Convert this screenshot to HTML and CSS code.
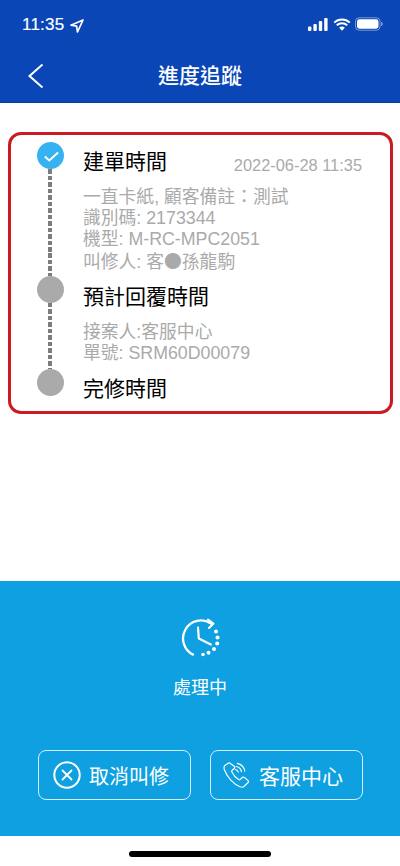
FILE: index.html
```html
<!DOCTYPE html>
<html lang="zh-Hant">
<head>
<meta charset="utf-8">
<title>進度追蹤</title>
<link rel="stylesheet" href="styles.css">
</head>
<body>
<div class="screen">
  <header class="header">
    <div class="status">
      <div class="time">11:35
        <svg class="loc" viewBox="0 0 14 14" width="14" height="14"><path d="M13 1 1 6.200l5.600.9.9 5.900z" fill="none" stroke="#fff" stroke-width="1.700" stroke-linejoin="round"/></svg>
      </div>
      <div class="status-icons">
        <svg viewBox="0 0 20 13" width="20" height="13"><g fill="#fff"><rect x="0" y="8.500" width="3.400" height="4.500" rx="1"/><rect x="5.400" y="6" width="3.400" height="7" rx="1"/><rect x="10.800" y="3" width="3.400" height="10" rx="1"/><rect x="16.200" y="0" width="3.400" height="13" rx="1"/></g></svg>
        <svg viewBox="0 0 18 13" width="18" height="13"><path d="M1.200 4.600a11.200 11.200 0 0 1 15.600 0M3.800 7.300a7.500 7.500 0 0 1 10.400 0" fill="none" stroke="#fff" stroke-width="2"/><path d="M6.200 9.700a3.800 3.800 0 0 1 5.600 0L9 12.800z" fill="#fff"/></svg>
        <svg viewBox="0 0 29 14" width="29" height="14"><rect x=".5" y=".8" width="24.500" height="12.400" rx="3.600" fill="none" stroke="#fff" stroke-opacity=".45"/><rect x="2" y="2.300" width="21.500" height="9.400" rx="2.400" fill="#fff"/><path d="M26.200 4.800c1 .4 1.600 1.200 1.600 2.200s-.6 1.800-1.600 2.200z" fill="#fff" fill-opacity=".5"/></svg>
      </div>
    </div>
    <nav class="nav">
      <svg class="back" viewBox="0 0 18 26" width="18" height="26"><path d="M15.500 1.500 2.500 13l13 11.500" fill="none" stroke="#fff" stroke-width="2"/></svg>
      <h1 class="title">進度追蹤</h1>
    </nav>
  </header>

  <main class="main">
    <section class="timeline">
      <div class="step step-first">
        <div class="rail">
          <span class="dot dot-done">
            <svg viewBox="0 0 26 26" width="26" height="26"><path d="M6.800 13.500l4.500 4 8.800-8" fill="none" stroke="#fff" stroke-width="2"/></svg>
          </span>
          <span class="dash"></span>
        </div>
        <div class="body">
          <div class="head"><h2 class="step-title">建單時間</h2><span class="stamp">2022-06-28 11:35</span></div>
          <p class="detail">一直卡紙, 顧客備註：測試<br>識別碼: 2173344<br>機型: M-RC-MPC2051<br>叫修人: 客<span class="mask">●</span>孫龍駒</p>
        </div>
      </div>
      <div class="step step-second">
        <div class="rail">
          <span class="dot"></span>
          <span class="dash"></span>
        </div>
        <div class="body">
          <div class="head"><h2 class="step-title">預計回覆時間</h2></div>
          <p class="detail">接案人:客服中心<br>單號: SRM60D00079</p>
        </div>
      </div>
      <div class="step step-last">
        <div class="rail"><span class="dot"></span></div>
        <div class="body">
          <div class="head"><h2 class="step-title">完修時間</h2></div>
        </div>
      </div>
    </section>
  </main>

  <section class="panel">
    <div class="state">
      <svg viewBox="0 0 40 40" width="40" height="40">
        <g fill="none" stroke="#fff" stroke-linecap="round" stroke-linejoin="round">
          <path d="M31 5.500A18 18 0 1 0 13 36.600" stroke-width="2.300"/>
          <path d="M18 9.500l.8 11 12 6" stroke-width="2.200"/>
          <path d="M28 1.500l5.500 4-4.500 4.500" stroke-width="2.100"/>
        </g>
        <g fill="#fff"><circle cx="36" cy="13.500" r="2"/><circle cx="37.500" cy="19.500" r="2"/><circle cx="37.200" cy="25.500" r="2"/><circle cx="34" cy="31" r="2"/><circle cx="28.500" cy="34.800" r="2"/><circle cx="23" cy="36.500" r="1.800"/></g>
      </svg>
      <div class="state-label">處理中</div>
    </div>
    <div class="actions">
      <button class="action" type="button">
        <svg viewBox="0 0 28 28" width="28" height="28"><circle cx="14" cy="14" r="12.700" fill="none" stroke="#fff" stroke-width="2"/><path d="M9.500 9.500l9 9M18.500 9.500l-9 9" stroke="#fff" stroke-width="1.800" stroke-linecap="round"/></svg>
        <span>取消叫修</span>
      </button>
      <button class="action action-wide" type="button">
        <svg viewBox="0 0 28 28" width="28" height="28"><g fill="none" stroke="#fff" stroke-linejoin="round" stroke-linecap="round" stroke-width="1.200"><path d="M5.200 2.200 1.800 4.600c-.9.8-1 2.400-.4 4.200 2.700 7.500 9.200 14.300 15.600 17 1.800.7 3.200.5 4.100-.4l4-3.900c.6-.6.6-1.400 0-1.900l-3.800-3.200c-.6-.5-1.400-.4-2 .1l-2 1.900c-.5.400-1.100.5-1.700.1-2.500-1.600-5.400-4.900-6.700-7.600-.3-.6-.2-1.200.3-1.600l2-1.800c.6-.6.7-1.300.3-2L7.300 2.500c-.5-.7-1.400-.8-2.100-.3z"/><path d="M12.500 8.500c1.300.3 2.300 1.200 2.700 2.600M13.300 5.500c2.700.5 4.600 2.500 5.200 5.200M14.300 2.300c3.800.8 6.800 3.800 7.500 7.800"/></g></svg>
        <span>客服中心</span>
      </button>
    </div>
  </section>

  <footer class="home"><span class="home-bar"></span></footer>
</div>
</body>
</html>
```

FILE: styles.css
```css
* { box-sizing: border-box; }
html, body { margin: 0; padding: 0; background: #fff; }
body { font-family: "Liberation Sans", "Noto Sans CJK TC", sans-serif; }
h1, h2, p { margin: 0; font-weight: 400; }

.screen { width: 400px; height: 866px; display: flex; flex-direction: column; overflow: hidden; }

.header { height: 103px; background: #0a46b6; border-bottom: 1px solid #0a3d9e; color: #fff; flex: none; }
.status { height: 50px; padding: 15px 16px 0 22px; display: flex; justify-content: space-between; align-items: flex-start; }
.time { display: flex; align-items: center; gap: 6px; font-size: 17px; line-height: 20px; letter-spacing: .2px; -webkit-text-stroke: .2px #fff; }
.loc { margin-top: 1px; }
.status-icons { display: flex; align-items: center; gap: 4.500px; margin-top: 2px; }
.nav { position: relative; height: 52px; display: flex; align-items: center; justify-content: center; padding-bottom: 1px; }
.back { position: absolute; left: 27px; top: 13px; }
.title { font-size: 21px; line-height: 28px; font-weight: 500; }

.main { flex: 1; padding: 29px 7px 0 8px; }
.timeline { height: 282px; border: 3px solid #cc1a22; border-radius: 13px; padding: 7px 28px 0 26px; }
.step { display: flex; gap: 19px; }
.step-first { height: 134px; }
.step-second { height: 93px; }
.rail { width: 27px; display: flex; flex-direction: column; align-items: center; flex: none; }
.dot { width: 27px; height: 27px; border-radius: 50%; background: #aaa; flex: none; display: flex; align-items: center; justify-content: center; }
.dot-done { background: #36b2f1; }
.dash { width: 4px; flex: 1; margin-right: 2px; background: repeating-linear-gradient(to bottom, #7d7d7d 0 4.500px, transparent 4.500px 6.500px); }
.body { flex: 1; min-width: 0; }
.head { display: flex; justify-content: space-between; align-items: flex-start; height: 40px; padding-top: 4.500px; }
.step-title { font-size: 21px; line-height: 30px; color: #000; white-space: nowrap; }
.stamp { font-size: 16.400px; line-height: 20px; color: #aaa; margin-top: 8.500px; }
.detail { font-size: 17.800px; line-height: 21px; color: #aaa; padding-top: 5px; white-space: nowrap; }
.mask { font-family: "Noto Sans CJK TC", sans-serif; }
.step-second .head { height: 46px; padding-top: 5.500px; }
.step-second .detail { padding-top: 0; }

.panel { height: 255px; background: #0ea0e0; flex: none; color: #fff; padding-top: 37px; }
.state { display: flex; flex-direction: column; align-items: center; }
.state-label { font-size: 18px; line-height: 24px; margin-top: 18px; }
.actions { display: flex; justify-content: center; gap: 19px; margin-top: 50px; }
.action { width: 153px; height: 50px; border: 1.500px solid #d4effb; border-radius: 8px; background: transparent; color: #fff; font: inherit; font-size: 20px; display: flex; align-items: center; justify-content: center; gap: 8px; padding: 0 6px 0 0; }
.action-wide { font-size: 21px; }

.home { height: 30px; flex: none; background: #fff; display: flex; justify-content: center; padding-top: 15px; }
.home-bar { width: 142px; height: 5.500px; border-radius: 3px; background: #000; }
```
